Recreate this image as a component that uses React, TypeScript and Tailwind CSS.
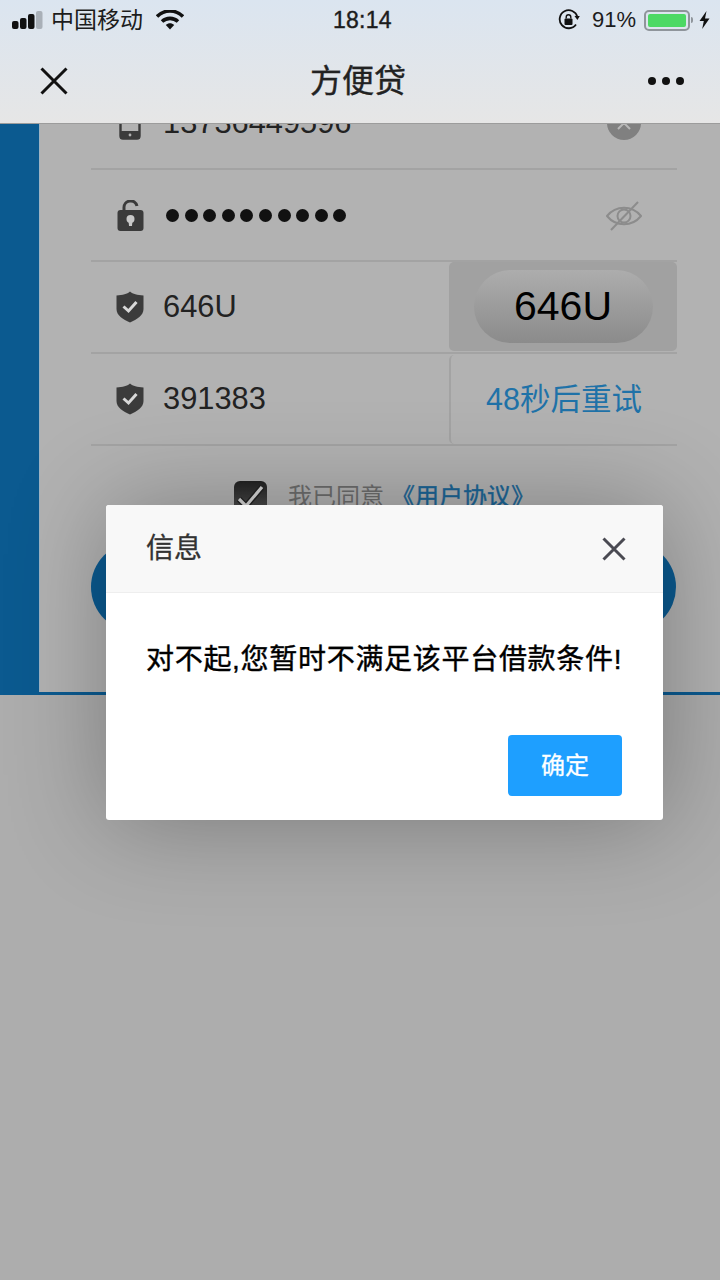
import React from "react";

const FONT = "font-['Liberation_Sans','Noto_Sans_CJK_SC',sans-serif]";

function Shield() {
  return (
    <svg width="28" height="32" viewBox="0 0 28 32">
      <path d="M14 0.5 C17 3 21 4.2 27.5 4.5 V18 C27.5 24.5 21 28.5 14 31.5 C7 28.5 0.5 24.5 0.5 18 V4.5 C7 4.2 11 3 14 0.5 Z" fill="#3b3b3b" />
      <path d="M7.5 15.5 L12.5 20 L20.5 11" fill="none" stroke="#d8d8d8" strokeWidth="3" />
    </svg>
  );
}

function Row({ icon, children }: { icon: React.ReactNode; children: React.ReactNode }) {
  return (
    <div className="flex h-[92px] items-center border-b-2 border-[#a3a3a3]">
      <div className="flex w-[78px] justify-center">{icon}</div>
      <div className="ml-[-6px] flex min-w-0 flex-1 items-center self-stretch">{children}</div>
    </div>
  );
}

export default function App() {
  return (
    <div className={`relative h-[1280px] w-[720px] overflow-hidden bg-[#adadad] ${FONT}`}>
      {/* system + navigation bar */}
      <header className="relative z-10 h-[124px] border-b border-[#9c9c9c] bg-gradient-to-b from-[#dbe5f0] to-[#e6e6e6] text-[#1c1c1c]">
        <div className="flex h-[40px] items-center justify-between pl-[12px] pr-[10px]">
          <div className="flex items-center">
            <svg width="31" height="18" viewBox="0 0 31 18">
              <rect x="0" y="10" width="6.5" height="8" rx="2" fill="#111" />
              <rect x="8" y="7" width="6.5" height="11" rx="2" fill="#111" />
              <rect x="16" y="3" width="6.5" height="15" rx="2" fill="#111" />
              <rect x="24" y="0" width="6.5" height="18" rx="2" fill="#a9b0b8" />
            </svg>
            <span className="ml-[8px] text-[23px] leading-none">中国移动</span>
            <svg className="ml-[13px]" width="28" height="20" viewBox="0 0 28 20">
              <path d="M1 6.5 C8.5 -0.8 19.5 -0.8 27 6.5" fill="none" stroke="#111" strokeWidth="3.6" />
              <path d="M6 11.5 C10.5 7.3 17.5 7.3 22 11.5" fill="none" stroke="#111" strokeWidth="3.6" />
              <path d="M9.8 15 C12.4 12.6 15.6 12.6 18.2 15 L14 19.5 Z" fill="#111" />
            </svg>
          </div>
          <span className="absolute left-[333px] top-[7px] text-[23px] leading-[26px] tracking-[0.25px] [-webkit-text-stroke:0.4px_#1c1c1c]">18:14</span>
          <div className="flex items-center">
            <svg width="22" height="22" viewBox="0 0 22 22">
              <path d="M18 15.5 A9 9 0 1 1 19.4 8" fill="none" stroke="#111" strokeWidth="1.8" />
              <path d="M16.5 7 L21.8 7 L19.4 11 Z" fill="#111" />
              <rect x="6.5" y="9.5" width="8" height="6.5" rx="1" fill="#111" />
              <path d="M8.2 9.5 V8 A2.3 2.3 0 0 1 12.8 8 V9.5" fill="none" stroke="#111" strokeWidth="1.4" />
            </svg>
            <span className="ml-[12px] text-[22px] leading-none">91%</span>
            <div className="ml-[8px] h-[21px] w-[46px] rounded-[5px] border-2 border-[#8f959b] p-[2px]">
              <div className="h-full w-full rounded-[2px] bg-[#4cd964]" />
            </div>
            <div className="ml-[1px] h-[6px] w-[2px] rounded-r-[2px] bg-[#8f959b]" />
            <svg className="ml-[6px]" width="11" height="18" viewBox="0 0 11 18">
              <path d="M7.5 0 L0.5 10 H4.8 L3.2 18 L10.5 7.5 H6 Z" fill="#111" />
            </svg>
          </div>
        </div>
        <div className="relative flex h-[83px] items-center justify-between pb-[2px] pl-[40px] pr-[36px]">
          <svg width="28" height="28" viewBox="0 0 28 28">
            <path d="M1.5 1.5 L26.5 26.5 M26.5 1.5 L1.5 26.5" fill="none" stroke="#111" strokeWidth="3" />
          </svg>
          <span className="text-[32px] leading-none text-[#222] [-webkit-text-stroke:0.4px_#222]">方便贷</span>
          <div className="flex gap-[6px]">
            <span className="h-[8px] w-[8px] rounded-full bg-[#111]" />
            <span className="h-[8px] w-[8px] rounded-full bg-[#111]" />
            <span className="h-[8px] w-[8px] rounded-full bg-[#111]" />
          </div>
        </div>
      </header>

      {/* page below */}
      <main className="h-[571px] overflow-hidden bg-[#0b5a90] pl-[39px]">
        <div className="h-[568px] overflow-hidden border-l border-[#9fb3c2] bg-[#b2b2b2] pl-[51px] pr-[43px]">
          <div className="mt-[-46px]">
            <Row
              icon={
                <svg width="22" height="34" viewBox="0 0 22 34">
                  <rect x="1.5" y="1.5" width="19" height="31" rx="2.5" fill="none" stroke="#3b3b3b" strokeWidth="2.4" />
                  <rect x="1" y="25" width="20" height="8" rx="1.5" fill="#3b3b3b" />
                  <circle cx="11" cy="29" r="1.4" fill="#b2b2b2" />
                </svg>
              }
            >
              <span className="text-[30.8px] leading-none text-[#222]">13736449596</span>
              <div className="ml-auto mr-[36px] flex h-[34px] w-[34px] items-center justify-center rounded-full bg-[#808080]">
                <svg width="16" height="16" viewBox="0 0 16 16">
                  <path d="M2 2 L14 14 M14 2 L2 14" stroke="#b8b8b8" strokeWidth="2" />
                </svg>
              </div>
            </Row>
            <Row
              icon={
                <svg width="27" height="31" viewBox="0 0 27 31">
                  <path d="M7 11 V8 A6.6 6.6 0 0 1 20 6" fill="none" stroke="#3b3b3b" strokeWidth="3" />
                  <rect x="0.5" y="10" width="26" height="21" rx="3" fill="#3b3b3b" />
                  <circle cx="13.5" cy="19" r="4" fill="#c8c8c8" />
                  <path d="M11.5 20 L15.5 20 L15 26 L12 26 Z" fill="#c8c8c8" />
                </svg>
              }
            >
              <div className="ml-[3px] flex gap-[5.6px] pt-[1px]">
                {Array.from({ length: 10 }).map((_, i) => (
                  <span key={i} className="h-[13px] w-[13px] rounded-full bg-[#111]" />
                ))}
              </div>
              <svg className="ml-auto mr-[35px] mt-[1px]" width="36" height="30" viewBox="0 0 36 30">
                <path d="M1 15 C10 4 26 4 35 15 C26 26 10 26 1 15 Z" fill="none" stroke="#8c8c8c" strokeWidth="2" />
                <circle cx="18" cy="15" r="6.5" fill="none" stroke="#8c8c8c" strokeWidth="2" />
                <path d="M32 1 L5 29" stroke="#8c8c8c" strokeWidth="2" />
              </svg>
            </Row>
            <Row icon={<Shield />}>
              <span className="text-[30.8px] leading-none text-[#222]">646U</span>
              <div className="mb-[2px] ml-auto flex h-[89px] w-[228px] items-center justify-center rounded-[5px] bg-[#a1a1a1]">
                <div className="flex h-[73px] w-[179px] items-center justify-center rounded-full bg-gradient-to-b from-[#adadad] to-[#8b8b8b] text-[41px] leading-none text-black">
                  646U
                </div>
              </div>
            </Row>
            <Row icon={<Shield />}>
              <span className="text-[30.8px] leading-none text-[#222]">391383</span>
              <div className="ml-auto flex h-[89px] w-[228px] items-center justify-center rounded-l-[5px] border-l-2 border-[#a3a3a3] text-[30.5px] leading-none text-[#1f72a8]">
                48秒后重试
              </div>
            </Row>
          </div>
          <div className="flex h-[96px] items-center pl-[143px] pt-[6px]">
            <div className="flex h-[33px] w-[33px] items-center justify-center rounded-[6px] bg-gradient-to-b from-[#222] to-[#555]">
              <svg width="28" height="26" viewBox="0 0 28 26">
                <path d="M2 15 L9 22 L25 3" fill="none" stroke="#222" strokeWidth="6" />
                <path d="M2 15 L9 22 L25 3" fill="none" stroke="#d5d5d5" strokeWidth="3.2" />
              </svg>
            </div>
            <span className="ml-[21px] text-[24px] leading-none text-[#6d6d6d]">我已同意</span>
            <span className="ml-[7px] text-[24px] leading-none text-[#1b6596] [-webkit-text-stroke:0.4px_#1b6596]">《用户协议》</span>
          </div>
          <div className="mr-[1px] h-[90px] rounded-full bg-[#0b5a90]" />
        </div>
      </main>

      {/* dialog */}
      <div className="absolute left-[106px] top-[505px] flex h-[315px] w-[557px] flex-col overflow-hidden rounded-[3px] bg-white shadow-[2px_2px_100px_rgba(0,0,0,0.3)]">
        <div className="flex h-[88px] shrink-0 items-center justify-between border-b border-[#eeeeee] bg-[#f8f8f8] pl-[40px] pr-[37px] pt-[1px]">
          <span className="text-[28px] leading-none text-[#333] [-webkit-text-stroke:0.3px_#333]">信息</span>
          <svg width="24" height="24" viewBox="0 0 24 24">
            <path d="M1.5 1.5 L22.5 22.5 M22.5 1.5 L1.5 22.5" stroke="#4a4a52" strokeWidth="3" />
          </svg>
        </div>
        <p className="mt-[48px] whitespace-nowrap pl-[40px] text-[28px] leading-[38px] tracking-[0.7px] text-black [-webkit-text-stroke:0.4px_#000]">
          对不起,您暂时不满足该平台借款条件!
        </p>
        <div className="mt-[56px] flex justify-end pr-[41px]">
          <button className="flex h-[61px] w-[114px] items-center justify-center rounded-[4px] bg-[#1e9fff] text-[24px] leading-none text-white [-webkit-text-stroke:0.3px_#fff]">
            确定
          </button>
        </div>
      </div>
    </div>
  );
}
